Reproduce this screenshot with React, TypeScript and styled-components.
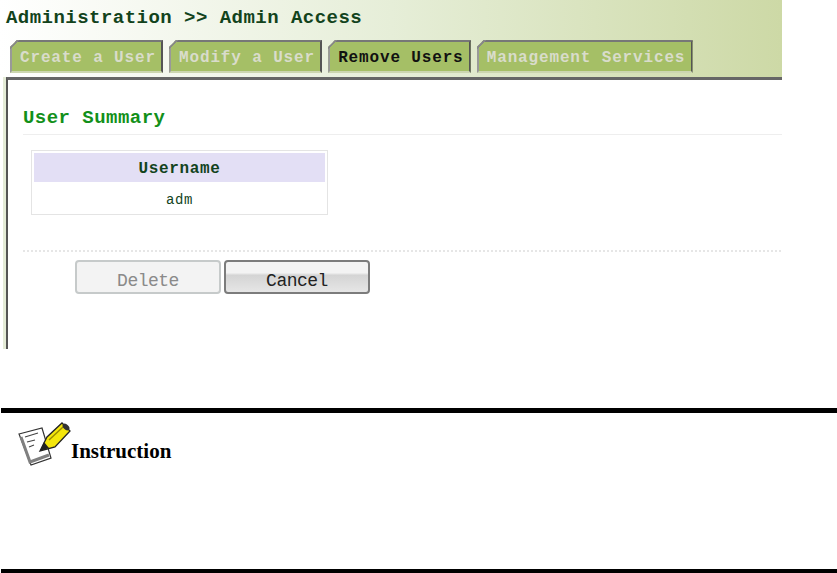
import React from 'react'
import styled, { createGlobalStyle } from 'styled-components'

const GlobalStyle = createGlobalStyle`
	html, body {
		margin: 0;
		padding: 0;
		background: #fff;
	}
`

const tabs = ['Create a User', 'Modify a User', 'Remove Users', 'Management Services']

const App = () => (
	<Page>
		<GlobalStyle />
		<Shot>
			<Header>
				<Title>Administration &gt;&gt; Admin Access</Title>
				<TabRow>
					{tabs.map(tab => (
						<Tab key={tab} $active={tab === 'Remove Users'}>
							{tab}
						</Tab>
					))}
				</TabRow>
			</Header>
			<Panel>
				<SectionTitle>User Summary</SectionTitle>
				<SummaryTable>
					<HeadCell>Username</HeadCell>
					<BodyCell>adm</BodyCell>
				</SummaryTable>
				<DottedRule />
				<Buttons>
					<ActionButton disabled>Delete</ActionButton>
					<ActionButton>Cancel</ActionButton>
				</Buttons>
			</Panel>
		</Shot>
		<Note>
			<NoteHead>
				<svg width="54" height="44" viewBox="0 0 54 44">
					<path d="M1 12 L24 6 L33 36 L13 43 Z" fill="#fff" stroke="#333" strokeWidth="1.2" />
					<path d="M3 15 L12 40 L31 33" fill="none" stroke="#808080" strokeWidth="3" />
					<path d="M7 15 L20 11 M9 20 L17 18 M11 25 L16 23" stroke="#444" strokeWidth="1.1" />
					<path d="M22 29 L29 15 L44 1 L52 9 L37 25 Z" fill="#f4e60c" stroke="#222" strokeWidth="1.3" />
					<path d="M22 29 L26 20 L31 26 Z" fill="#222" />
					<path d="M31 18 L45 5" stroke="#9a8a00" strokeWidth="1.4" />
					<ellipse cx="48" cy="5" rx="2.6" ry="4" transform="rotate(-45 48 5)" fill="#333" />
				</svg>
				<NoteLabel>Instruction</NoteLabel>
			</NoteHead>
		</Note>
	</Page>
)

export default App

const Page = styled.div`
	width: 837px;
	height: 573px;
	overflow: hidden;
	background: #fff;
	position: relative;
`

const Shot = styled.div`
	width: 782px;
	height: 349px;
	display: flex;
	flex-direction: column;
`

const Header = styled.div`
	height: 77px;
	flex: none;
	background: linear-gradient(90deg, #fff 0%, #e6eed8 50%, #cdd9a6 100%);
	padding: 8px 0 0 6px;
	box-sizing: border-box;
`

const Title = styled.div`
	font: bold 19px/21px 'Liberation Mono', monospace;
	letter-spacing: 0.47px;
	color: #12431c;
	white-space: nowrap;
`

const TabRow = styled.div`
	display: flex;
	gap: 6px;
	margin: 11px 0 0 4px;
`

const Tab = styled.div<{ $active?: boolean }>`
	position: relative;
	height: 33px;
	box-sizing: border-box;
	padding: 0 5.2px 0 8px;
	background: #a5bf66;
	border-top: 2px solid #777;
	border-right: 2px solid #555;
	border-left: 2px solid #999;
	border-bottom: 2px solid #ccd6b0;
	clip-path: polygon(7px 0, 100% 0, 100% 100%, 0 100%, 0 7px);
	font: bold 16px/33px 'Liberation Mono', monospace;
	letter-spacing: 0.85px;
	color: ${p => (p.$active ? '#111' : '#d9dccb')};
	white-space: nowrap;

	&::before {
		content: '';
		position: absolute;
		top: -2px;
		left: -2px;
		width: 10px;
		height: 10px;
		background: linear-gradient(135deg, transparent 4.6px, #888 4.6px, #888 6.4px, transparent 6.4px);
	}
`

const Panel = styled.div`
	flex: 1;
	border-top: 3px solid #666;
	border-left: 2px solid #555;
	margin-left: 6px;
	box-shadow: -3px 0 0 #e4ebd6;
	padding: 28px 0 0 15px;
	box-sizing: border-box;
`

const SectionTitle = styled.div`
	font: bold 19px/20px 'Liberation Mono', monospace;
	letter-spacing: 0.47px;
	color: #12901a;
	padding-bottom: 6px;
	border-bottom: 1px solid #eee;
`

const SummaryTable = styled.div`
	width: 297px;
	height: 65px;
	box-sizing: border-box;
	margin: 15px 0 0 8px;
	border: 1px solid #e4e4e4;
	padding: 2px 2px 0;
	text-align: center;
	color: #12431c;
`

const HeadCell = styled.div`
	height: 29px;
	background: #e3dff5;
	font: bold 16px/33px 'Liberation Mono', monospace;
	letter-spacing: 0.65px;
`

const BodyCell = styled.div`
	font: 14px/36px 'Liberation Mono', monospace;
	letter-spacing: 0.6px;
`

const DottedRule = styled.div`
	margin-top: 35px;
	height: 2px;
	background: repeating-linear-gradient(90deg, #e6e6e6 0 2px, transparent 2px 4px);
`

const Buttons = styled.div`
	display: flex;
	gap: 3px;
	margin: 8px 0 0 52px;
`

const ActionButton = styled.button`
	width: 146px;
	height: 34px;
	padding: 7px 0 0;
	border-radius: 4px;
	border: 2px solid ${p => (p.disabled ? '#c6caca' : '#7c7c7c')};
	background: ${p => (p.disabled ? '#f3f3f3' : 'linear-gradient(#f3f3f3 36%, #d4d4d4 44%, #e6e6e6)')};
	color: ${p => (p.disabled ? '#8a8a8a' : '#222')};
	font: 18px 'Liberation Mono', monospace;
	letter-spacing: -0.5px;
`

const Note = styled.div`
	position: absolute;
	top: 408px;
	left: 1px;
	right: 0;
	height: 165px;
	box-sizing: border-box;
	border-top: 5px solid #000;
	border-bottom: 4px solid #000;
`

const NoteHead = styled.div`
	display: flex;
	align-items: flex-start;
	padding: 9px 0 0 17px;
	box-sizing: border-box;
`

const NoteLabel = styled.span`
	font: bold 21px/24px 'Liberation Serif', serif;
	color: #000;
	margin: 17px 0 0 -1px;
`
